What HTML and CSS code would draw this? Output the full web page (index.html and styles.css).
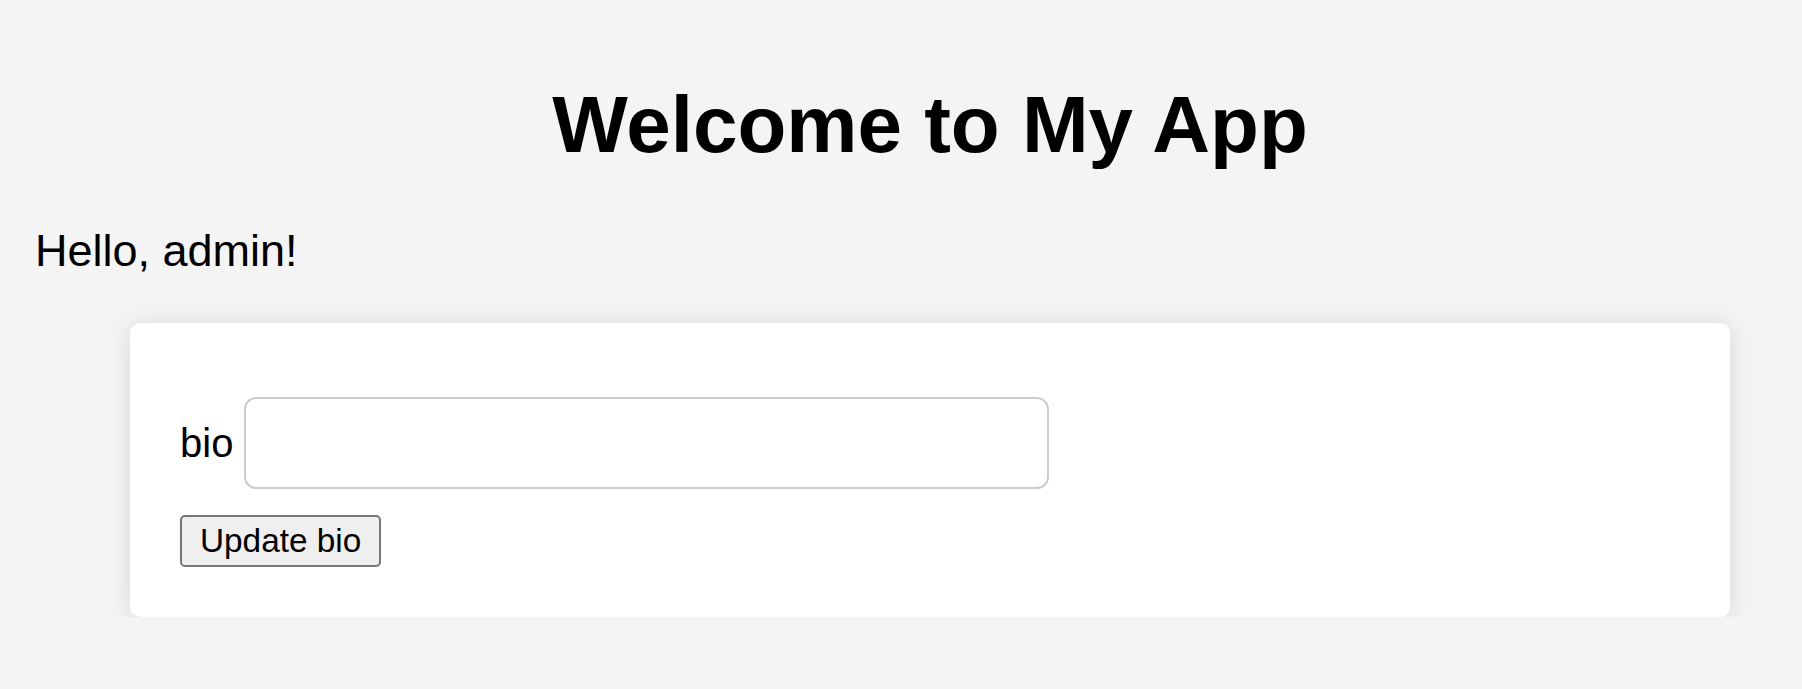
FILE: index.html
```html
<!DOCTYPE html>
<html lang="en">
<head>
<meta charset="utf-8">
<title>My App</title>
<link rel="stylesheet" href="styles.css">
</head>
<body>
<div class="page">
  <h1 class="title">Welcome to My App</h1>
  <p class="greeting">Hello, admin!</p>
  <div class="card">
    <form class="bio-form">
      <div class="field-row">
        <label class="field-label" for="bio">bio</label>
        <input class="field-input" id="bio" type="text" name="bio">
      </div>
      <div class="actions">
        <button class="submit-btn" type="submit">Update bio</button>
      </div>
    </form>
  </div>
</div>
</body>
</html>
```
FILE: styles.css
```css
html, body {
  margin: 0;
  padding: 0;
  overflow: hidden;
  background: #f4f4f4;
}

body {
  font-family: "Liberation Sans", Arial, sans-serif;
  color: #000;
}

.page {
  width: 1790px;
  padding: 79px 0 0 35px;
}

.title {
  margin: 0;
  font-size: 80px;
  font-weight: bold;
  text-align: center;
  line-height: normal;
}

.greeting {
  margin: 54px 0 46px;
  font-size: 45px;
  line-height: normal;
}

.card {
  width: 1600px;
  box-sizing: border-box;
  margin: 0 auto;
  padding: 74px 50px 50px;
  background: #fff;
  border-radius: 10px;
  box-shadow: 0 2px 24px rgba(0, 0, 0, 0.12);
}

.bio-form {
  margin: 0;
}

.field-row {
  display: flex;
  align-items: center;
  gap: 11px;
}

.field-label {
  font-size: 40px;
  line-height: normal;
}

.field-input {
  width: 805px;
  height: 92px;
  box-sizing: border-box;
  border: 2px solid #cccccc;
  border-radius: 12px;
  background: #fff;
  padding: 0 16px;
  font-size: 40px;
  font-family: inherit;
  outline: none;
  margin: 0;
}

.actions {
  margin-top: 26px;
}

.submit-btn {
  font-family: "Liberation Sans", Arial, sans-serif;
  font-size: 33.33px;
  line-height: normal;
  padding: 5px 18px;
  border: 2px solid #767676;
  border-radius: 5px;
  background: #efefef;
  color: #000;
  margin: 0;
}
```
